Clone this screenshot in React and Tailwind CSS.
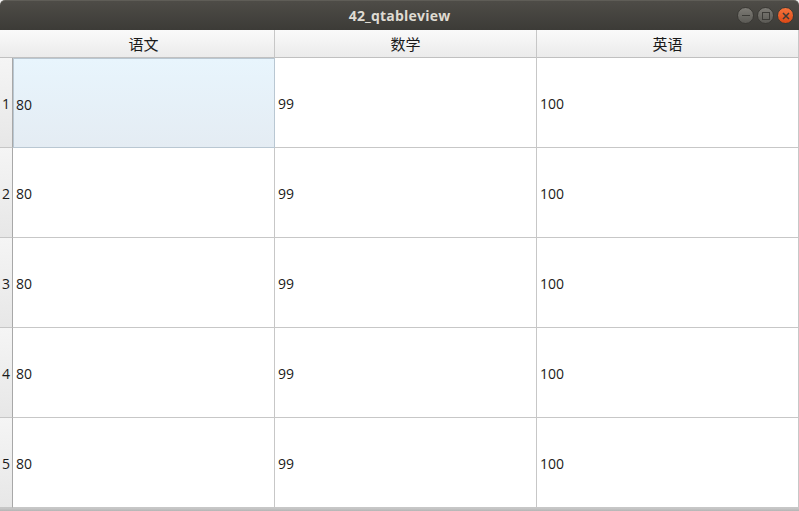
import React from "react";

const cols = ["语文", "数学", "英语"];
const vals = ["80", "99", "100"];

export default function App() {
  return (
    <div
      className="w-[799px] h-[511px] bg-[#f2f1f0] flex flex-col overflow-hidden"
      style={{ fontFamily: '"Open Sans", "Noto Sans CJK SC", sans-serif' }}
    >
      {/* title bar */}
      <div className="h-[30px] shrink-0 relative flex items-center justify-center bg-gradient-to-b from-[#4e4c47] to-[#3c3b37] border-t border-[#5f5d57] rounded-t-[5px]">
        <span className="text-[14px] font-bold text-[#dfdbd2] tracking-[0.2px]">42_qtableview</span>
        <div className="absolute right-[5px] top-[6px] flex gap-[3px]">
          <div className="w-[17px] h-[17px] rounded-full bg-gradient-to-b from-[#7d7b75] to-[#5b5a55] border border-[#3a3935] flex items-center justify-center">
            <div className="w-[8px] h-[1.5px] bg-[#3c3b37]" />
          </div>
          <div className="w-[17px] h-[17px] rounded-full bg-gradient-to-b from-[#7d7b75] to-[#5b5a55] border border-[#3a3935] flex items-center justify-center">
            <div className="w-[8px] h-[8px] border-[1.5px] border-[#3c3b37]" />
          </div>
          <div className="w-[17px] h-[17px] rounded-full bg-gradient-to-b from-[#f4733b] to-[#dd4814] border border-[#3a3935] flex items-center justify-center">
            <svg width="8" height="8" viewBox="0 0 8 8">
              <path d="M1 1L7 7M7 1L1 7" stroke="#3c3b37" strokeWidth="1.5" />
            </svg>
          </div>
        </div>
      </div>

      {/* table */}
      <div className="grid grid-cols-[13px_262px_262px_262px] grid-rows-[28px_repeat(5,90px)] bg-white">
        <div className="bg-gradient-to-b from-[#fafafa] to-[#ebebeb] border-b border-[#c0c0c0]" />
        {cols.map((c) => (
          <div
            key={c}
            className="bg-gradient-to-b from-[#fafafa] to-[#ebebeb] border-b border-r border-[#c7c7c7] border-b-[#c0c0c0] flex items-center justify-center pt-[1px] text-[15px] text-[#1a1a1a]"
          >
            {c}
          </div>
        ))}
        {[1, 2, 3, 4, 5].map((r) => (
          <React.Fragment key={r}>
            <div className="bg-gradient-to-b from-[#f5f5f5] to-[#e7e7e7] border-b border-r border-[#c6c6c6] border-r-[#a8a8a8] flex items-center justify-center pt-[2px] text-[14px] text-[#1a1a1a]">
              {r}
            </div>
            {vals.map((v, i) => {
              const sel = r === 1 && i === 0;
              return (
                <div
                  key={i}
                  className={
                    sel
                      ? "bg-gradient-to-b from-[#e8f5fd] to-[#e4ecf3] border border-[#b9c7d2] flex items-center pl-[2px] pt-[2px] text-[14px] text-[#1a1a1a]"
                      : "border-b border-r border-[#c7c7c7] flex items-center pl-[3px] pt-[2px] text-[14px] text-[#1a1a1a]"
                  }
                >
                  {v}
                </div>
              );
            })}
          </React.Fragment>
        ))}
      </div>
      <div className="flex-1 bg-gradient-to-b from-[#c9c9c9] to-[#b5b5b5]" />
    </div>
  );
}
